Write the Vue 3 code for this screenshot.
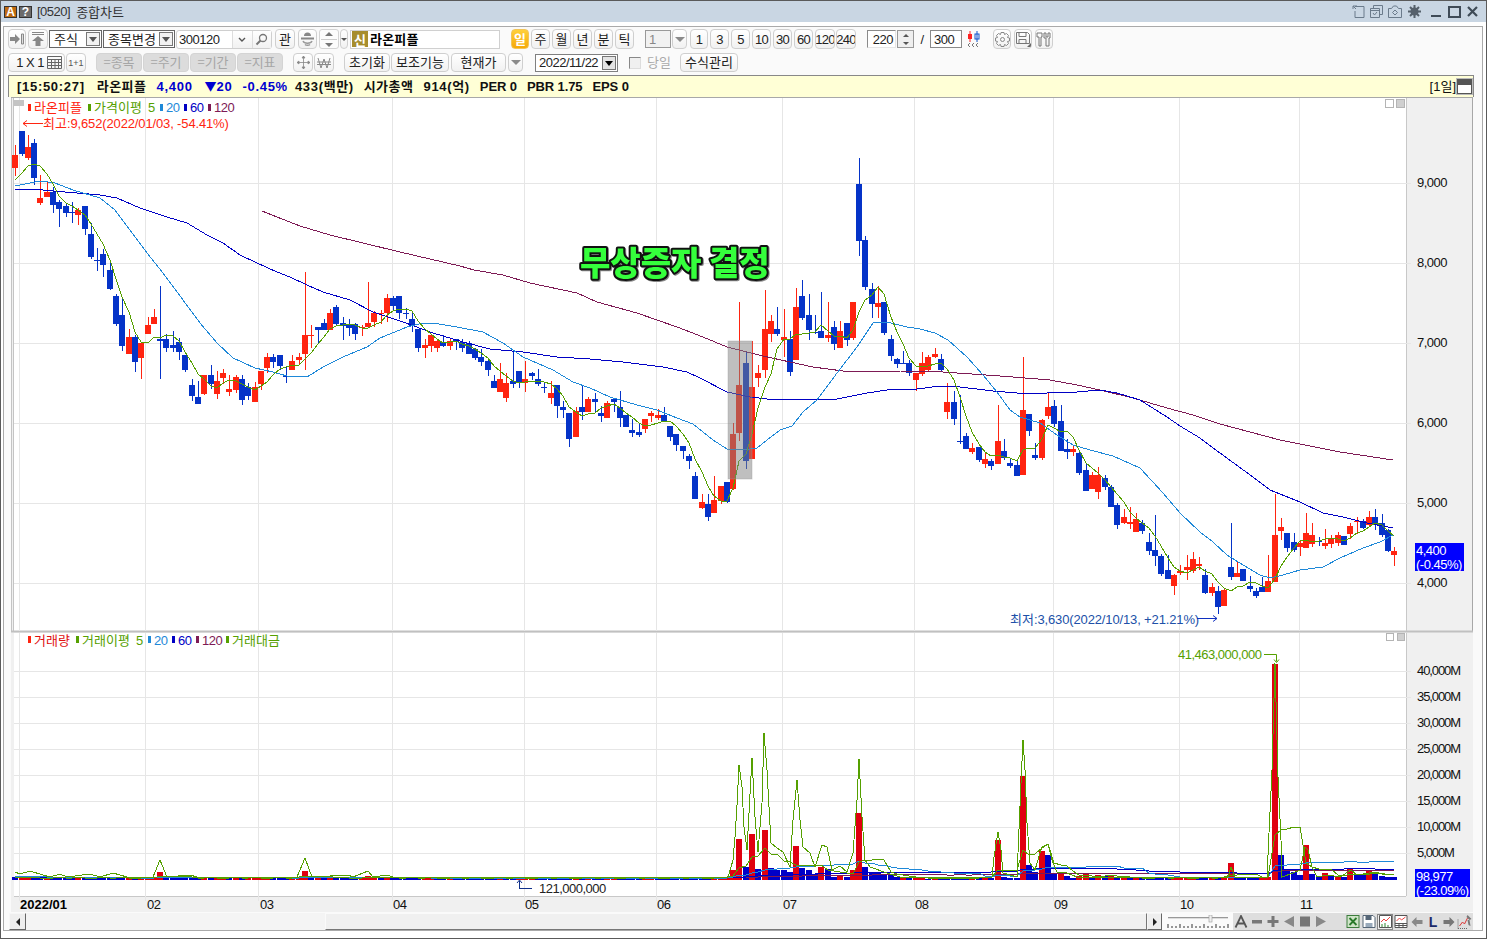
<script setup>
import { computed } from 'vue'

// [up, high, bodyTop, bodyBottom, low] in chart pixels
const candles = [
[1,145,155,168,176],[0,131,131,154,156],[1,135,147,158,160],[0,139,143,178,185],[1,175,198,203,205],[1,182,192,197,197],[0,187,192,205,213],[0,200,202,209,227],[0,203,206,213,217],[0,202,212,213,223],
[1,208,210,215,225],[0,206,206,229,235],[0,223,234,257,259],[0,248,260,261,271],[0,249,254,265,277],[0,261,270,289,290],[0,294,296,324,326],[0,299,315,346,351],[1,329,337,354,354],[0,335,337,362,372],
[1,342,343,358,379],[1,317,325,334,334],[1,309,317,324,324],[0,286,339,341,379],[0,334,339,348,352],[0,331,345,348,352],[0,338,342,352,360],[0,355,355,370,372],[0,379,385,396,401],[0,381,397,404,404],
[1,375,375,394,395],[0,365,375,384,389],[1,371,381,394,399],[1,369,373,378,384],[1,375,389,392,396],[1,375,377,390,393],[0,375,379,400,405],[0,383,387,396,400],[1,382,387,402,402],[1,371,371,384,390],
[1,353,357,368,373],[0,354,357,362,368],[0,355,355,366,370],[0,367,376,377,383],[1,355,361,370,370],[1,353,357,360,365],[1,272,335,354,370],[1,325,335,336,348],[0,327,327,330,343],[0,319,323,330,330],
[1,309,313,330,330],[0,305,307,324,325],[0,317,323,326,340],[0,319,325,328,336],[0,323,324,334,340],[1,325,327,328,336],[1,282,323,327,327],[1,311,313,322,327],[1,310,313,314,324],[1,294,298,313,322],
[0,296,298,306,310],[0,296,296,313,319],[0,308,313,314,319],[0,312,319,326,332],[0,329,329,348,352],[1,339,345,348,358],[1,334,335,346,352],[1,339,341,348,352],[0,335,342,346,347],[1,338,341,346,350],
[0,339,339,342,350],[0,339,342,348,352],[0,341,343,354,354],[0,348,349,358,360],[0,349,357,362,366],[0,358,361,370,376],[0,375,381,388,388],[1,363,379,392,392],[1,373,383,398,402],[0,351,381,384,388],
[0,371,371,383,388],[1,361,379,383,392],[0,372,373,376,380],[0,369,379,384,386],[0,383,387,388,393],[1,381,393,398,404],[0,385,385,406,418],[0,401,407,410,418],[0,413,413,439,447],[1,407,411,437,437],
[0,385,407,412,420],[1,397,399,412,412],[0,393,399,402,412],[0,406,413,416,422],[1,401,403,418,418],[0,399,399,402,412],[0,391,407,418,427],[0,415,415,427,427],[0,419,430,433,437],[0,423,432,435,437],
[1,419,419,429,433],[1,411,413,416,422],[1,409,415,418,420],[0,407,415,422,422],[0,426,426,437,441],[0,434,434,445,451],[0,446,446,451,459],[0,454,456,461,469],[0,472,476,499,499],[1,494,502,508,509],
[0,494,504,517,521],[1,476,500,513,513],[1,486,486,501,504],[0,482,482,502,503],[1,423,434,489,490],[1,302,385,433,441],[0,352,363,461,469],[1,341,387,459,459],[1,365,373,378,387],[1,290,329,370,378],
[1,315,321,334,342],[0,307,329,334,336],[1,309,337,340,357],[0,331,339,372,376],[1,288,307,360,360],[0,280,296,318,320],[0,294,315,330,340],[0,315,332,333,334],[0,292,331,338,338],[1,302,335,338,342],
[0,321,327,344,350],[1,321,331,348,348],[0,323,323,340,346],[1,302,302,338,340],[0,158,184,241,256],[0,236,240,287,290],[0,283,289,304,318],[1,286,303,307,318],[0,302,302,333,335],[0,335,339,356,361],
[0,358,359,364,368],[0,351,363,364,364],[0,360,363,373,376],[1,373,373,380,391],[1,352,363,374,376],[1,355,357,370,371],[1,348,354,357,358],[0,354,359,370,372],[1,383,402,412,419],[0,391,402,419,425],
[0,395,441,442,444],[0,433,436,449,449],[1,443,448,452,454],[0,447,447,460,462],[1,453,459,464,468],[0,459,461,466,470],[1,405,441,464,464],[0,439,451,458,460],[0,459,463,466,468],[0,461,465,476,476],
[1,357,410,475,475],[0,414,414,431,436],[0,443,455,458,460],[1,419,420,458,460],[1,392,407,416,419],[0,400,406,424,427],[0,405,421,451,451],[0,439,449,452,459],[1,446,449,452,456],[0,450,453,473,475],
[0,464,470,491,491],[1,472,475,489,489],[1,467,475,492,499],[0,475,478,487,490],[0,485,487,507,507],[0,503,505,525,529],[1,509,517,523,524],[1,507,522,524,529],[1,513,519,532,532],[0,520,523,531,534],
[0,533,542,551,555],[0,515,550,556,566],[0,554,556,574,576],[0,555,570,579,579],[1,574,575,586,595],[1,565,571,573,575],[1,555,567,570,580],[1,552,559,571,573],[1,557,564,566,570],[0,569,575,593,594],
[1,583,587,593,596],[0,586,591,607,614],[1,589,590,606,606],[0,523,567,577,580],[1,561,573,577,577],[0,569,569,581,581],[0,576,586,589,592],[0,588,591,596,598],[0,577,587,592,592],[1,555,581,592,592],
[1,494,535,582,582],[1,518,527,531,540],[0,533,533,548,552],[0,533,542,550,552],[1,540,543,547,556],[1,513,533,548,548],[1,523,535,544,547],[0,537,541,542,546],[1,529,543,546,549],[1,535,539,544,548],
[1,532,535,543,546],[0,536,536,545,545],[1,523,526,534,539],[1,517,521,522,534],[0,519,521,528,529],[1,511,517,525,527],[0,509,517,525,530],[0,514,523,535,537],[0,529,530,551,552],[1,547,551,555,566],
]

const xAt = (i) => Math.round(15.3 + i * 6.297)
const toPts = (flat) => {
  const out = []
  for (let i = 0; i < flat.length; i += 2) out.push(flat[i] + ',' + flat[i + 1])
  return out.join(' ')
}
const closes = candles.map((c) => (c[0] ? c[2] : c[3]))
const movingAvg = (vals, n, seed) =>
  vals.map((_, i) => {
    let s = 0
    for (let k = i - n + 1; k <= i; k++) s += k >= 0 ? vals[k] : seed
    return s / n
  })
const series = (vals, from = 0) =>
  vals.map((v, i) => (i >= from ? xAt(i) + ',' + Math.round(v) : '')).filter(Boolean).join(' ')

const ma5 = computed(() => series(movingAvg(closes, 5, 186)))

const ma20 = toPts([15,186,40,181,55,183,73,190,100,198,115,210,130,230,147,253,163,273,183,300,200,323,217,343,233,358,255,368,273,372,287,376,307,377,323,367,343,357,367,347,380,338,407,327,423,323,433,323,457,327,483,332,503,343,523,357,553,370,573,382,590,388,610,397,637,405,657,410,677,418,693,424,713,440,727,449,743,450,757,448,767,440,780,430,792,426,803,412,817,400,837,373,857,347,873,323,887,322,907,327,920,329,935,333,948,340,967,357,983,375,997,392,1010,410,1020,417,1040,423,1057,435,1073,445,1090,450,1113,456,1140,468,1163,493,1180,513,1200,532,1213,542,1227,555,1243,565,1260,575,1270,578,1283,575,1300,570,1323,567,1340,558,1363,548,1380,542,1393,535])
const ma60 = toPts([15,190,33,189,53,191,77,193,100,195,117,198,140,208,167,217,187,223,207,235,223,243,240,255,257,263,277,272,290,277,307,285,323,292,350,300,373,312,403,322,433,333,463,342,490,349,523,352,557,357,590,359,623,362,663,367,687,372,700,378,727,392,750,397,767,399,790,400,817,399,837,399,867,393,887,390,917,389,940,386,960,387,993,391,1017,393,1047,393,1077,392,1100,390,1117,393,1140,400,1167,417,1180,426,1200,438,1220,453,1257,480,1270,490,1300,502,1323,513,1343,517,1367,523,1393,528])
const ma120 = toPts([262,211,277,217,300,226,330,235,400,252,460,266,474,270,503,275,530,283,577,293,597,302,637,313,677,327,703,337,727,347,763,356,790,362,813,367,843,371,873,371,900,371,943,372,1000,376,1050,380,1077,385,1100,390,1133,398,1167,408,1193,415,1220,424,1280,440,1340,452,1393,460])

const volOver = {23:[872,1],46:[871,1],56:[876,1],113:[877,1],114:[870,1],115:[839,1],116:[867,0],117:[834,1],118:[869,0],119:[830,1],120:[868,0],121:[870,0],122:[870,0],123:[872,0],124:[846,1],125:[868,0],126:[870,0],127:[874,0],128:[867,1],129:[869,0],130:[877,0],131:[875,1],132:[877,0],133:[870,1],134:[813,1],135:[867,0],136:[872,0],137:[872,0],138:[875,0],139:[875,0],140:[877,0],141:[877,1],142:[877,0],143:[878,1],144:[878,1],145:[879,0],146:[878,1],156:[840,1],160:[776,1],161:[865,0],162:[872,0],163:[851,1],164:[855,0],165:[873,0],166:[873,1],167:[876,0],168:[878,0],169:[876,1],170:[874,1],171:[877,0],172:[875,1],173:[876,0],174:[875,1],175:[877,0],193:[863,1],194:[877,0],199:[877,1],200:[664,1],201:[855,0],202:[869,0],203:[872,0],204:[875,0],205:[845,1],206:[874,0],207:[877,0],208:[873,1],209:[876,0],210:[876,1],211:[877,0],212:[869,1],213:[874,0],214:[875,0],215:[871,1],216:[873,0],217:[876,0],218:[877,0],219:[877,0]}

const volumes = candles.map((c, i) => {
  const o = volOver[i]
  if (o) return { top: o[0], up: o[1] }
  const up = i > 0 && closes[i] < closes[i - 1] ? 1 : 0
  return { top: 880 - (i * 5 % 7 < 3 ? 3 : 2), up }
})
const heights = volumes.map((v) => 880 - v.top)
const volLine = (n, seed, from = 0) =>
  series(movingAvg(heights, n, seed).map((h) => 880 - h), from)
const vol5 = volLine(5, 3)
const vol20 = volLine(20, 4)
const vol60 = volLine(60, 3)
const vol120 = volLine(120, 3, 39)
const valueLine = toPts([15,872,20,874,30,871,43,875,50,877,60,874,67,877,90,874,100,877,113,873,127,877,153,877,160,860,167,877,190,875,197,877,297,877,305,858,312,877,348,875,353,877,368,871,373,877,387,875,393,877,724,877,728,877,731,867,733,860,735,837,737,805,739,765,742,787,744,827,747,850,749,813,752,758,755,817,758,852,762,803,764,733,767,770,771,843,777,848,783,852,790,867,793,820,797,780,800,820,803,847,810,853,815,867,822,845,827,847,832,870,840,866,847,872,853,853,857,800,859,759,862,817,865,860,870,867,887,873,900,877,992,877,994,857,998,832,1001,850,1003,873,1017,877,1018,853,1021,783,1023,740,1025,770,1027,823,1030,863,1035,870,1040,853,1042,847,1048,844,1052,860,1057,872,1067,873,1077,877,1228,877,1231,867,1235,877,1267,877,1269,833,1272,770,1275,663,1278,777,1281,840,1282,877,1293,873,1300,870,1305,847,1308,850,1312,867,1317,877,1327,875,1340,877,1351,870,1357,875,1370,874,1377,873,1393,875])

const gridX = [19, 145, 258, 392, 524, 656, 782, 914, 1053, 1179, 1299]
const monthLabels = [[147,'02'],[260,'03'],[393,'04'],[525,'05'],[657,'06'],[783,'07'],[915,'08'],[1054,'09'],[1180,'10'],[1300,'11']]
const priceAxis = [[183,'9,000'],[263,'8,000'],[343,'7,000'],[423,'6,000'],[503,'5,000'],[583,'4,000']]
const volAxis = [[671,'40,000M'],[697,'35,000M'],[723,'30,000M'],[749,'25,000M'],[775,'20,000M'],[801,'15,000M'],[827,'10,000M'],[853,'5,000M']]
const periods = ['주', '월', '년', '분', '틱']
const minutes = [['1','w18'],['3','w19'],['5','w19'],['10','w19'],['30','w19'],['60','w19'],['120','w20'],['240','w20']]
</script>

<template>
  <div class="window">
    <header class="title">
      <span class="badge orange">A</span>
      <span class="badge grey">?</span>
      <span class="n title-code">[0520]</span>
      <span class="ko title-name">종합차트</span>
      <span class="title-right">
        <svg width="13" height="13" viewBox="0 0 13 13" class="tico"><path d="M3 1.500h9v11H3V6M1 1h4M1 1v3M1 1l3 3" /></svg>
        <svg width="13" height="13" viewBox="0 0 13 13" class="tico"><path d="M3.500 3V.5h9v9H10M.5 3.500h9v9h-9zM.5 5.500h9M3 8l1.500 2L7 7" /></svg>
        <svg width="14" height="13" viewBox="0 0 14 13" class="tico"><path d="M.5 3.500h3l2-2.500h3l2 2.500h3v9H.5zM7 5l2.500 2.500L7 10 4.500 7.500z" /></svg>
        <svg width="13" height="13" viewBox="0 0 13 13" class="tico gear"><circle cx="6.500" cy="6.500" r="3" /><path d="M6.500 0v13M0 6.500h13M2 2l9 9M11 2l-9 9" /></svg>
        <i class="win-min"></i><i class="win-max"></i>
        <svg width="11" height="11" viewBox="0 0 11 11" class="win-x"><path d="M1 1l9 9M10 1l-9 9" /></svg>
      </span>
    </header>

    <div class="frame">
      <div class="row row1">
        <button class="btn w18 ic"><svg width="14" height="12" viewBox="0 0 14 12"><path d="M0 4h5V1l5 5-5 5V8H0z" fill="#888" /><path d="M11.500 1v10h2V1z" fill="#ddd" stroke="#888" /></svg></button>
        <button class="btn w20 m2 ic"><svg width="14" height="15" viewBox="0 0 14 15"><path d="M1 .5h12M1 2.500h12" stroke="#888" /><path d="M7 4l6 5H9.500v5h-5V9H1z" fill="#888" /></svg></button>
        <div class="combo w53 m1"><span class="ko">주식</span><i class="caret"></i></div>
        <div class="combo w72 m1"><span class="ko">종목변경</span><i class="caret"></i></div>
        <div class="code m1">
          <span class="n val">300120</span>
          <span class="code-drop"><svg width="8" height="5" viewBox="0 0 8 5"><path d="M1 1l3 3 3-3" fill="none" stroke="#555" stroke-width="1.400" /></svg></span>
          <span class="code-find"><svg width="13" height="13" viewBox="0 0 13 13"><circle cx="8" cy="5" r="3.500" fill="none" stroke="#777" stroke-width="1.300" /><path d="M5.500 7.500L1.500 11.500" stroke="#777" stroke-width="2" /></svg></span>
        </div>
        <button class="btn w20 m3 ko">관</button>
        <button class="btn w19 m3 ic"><svg width="15" height="15" viewBox="0 0 15 15"><path d="M4 4a3.500 3.500 0 017 0zM1 5.500h13v2H1z" fill="#888" /><path d="M3 9c1 3 8 3 9 0M5 12.500c1 1 4 1 5 0" fill="none" stroke="#999" stroke-width="1.300" /></svg></button>
        <div class="updown m2"><i class="tri-u"></i><i class="mid"></i><i class="tri-d small"></i></div>
        <button class="btn w8 m1 ic"><i class="tri-d tiny"></i></button>
        <div class="name m2"><span class="shin">신</span><b class="ko">라온피플</b></div>

        <button class="btn w18 m11 ko active">일</button>
        <button v-for="p in periods" :key="p" class="btn w19 m2 ko">{{ p }}</button>

        <div class="mini m11"><span class="n">1</span></div>
        <button class="btn w15 m1 ic"><i class="tri-d"></i></button>
        <button v-for="(m, i) in minutes" :key="m[0]" class="btn n" :class="[m[1], i === 0 ? 'm3' : i === 7 ? 'm1' : 'm2']">{{ m[0] }}</button>

        <div class="inp w29 m11"><span class="n">220</span></div>
        <div class="spin"><i class="tri-u tiny"></i><i class="tri-d tiny"></i></div>
        <span class="slash n">/</span>
        <div class="inp w32"><span class="n">300</span></div>
        <span class="candle-ico m4">
          <svg width="16" height="18" viewBox="0 0 16 18"><path d="M4 1v11" stroke="#f22" /><rect x="2" y="4" width="4" height="5" fill="#f22" /><path d="M11 1v11" stroke="#15c" /><rect x="9" y="4" width="4" height="5" fill="none" stroke="#15c" /><path d="M4 13l-2 2 2 2M8 13l-2 2 2 2M12 13l-2 2 2 2" stroke="#777" fill="none" /></svg>
        </span>
        <button class="btn w18 m11 ic"><svg width="15" height="15" viewBox="0 0 15 15"><path d="M6 .5h3l.5 2 2-1 2 2-1 2 2 .5v3l-2 .5 1 2-2 2-2-1-.5 2H6l-.5-2-2 1-2-2 1-2-2-.5v-3l2-.5-1-2 2-2 2 1z" fill="none" stroke="#888" /><circle cx="7.500" cy="7.500" r="2" fill="none" stroke="#888" /></svg></button>
        <button class="btn w18 m3 ic"><svg width="15" height="15" viewBox="0 0 15 15"><path d="M.5.5h11l2 2v9h-13zM3 .5v4h7v-4M3 11.500v-4h7v4" fill="none" stroke="#777" /><path d="M15 11v4h-4z" fill="#666" /></svg></button>
        <button class="btn w18 m3 ic"><svg width="16" height="15" viewBox="0 0 16 15"><path d="M1 1h5v4H5v9H3V5H1zM8 1h2v4h2V1h2v5h-1v8h-3V6H8z" fill="none" stroke="#777" /></svg></button>
      </div>

      <div class="row row2">
        <button class="btn w57 grid-btn"><span class="n">1 X 1</span><svg width="15" height="13" viewBox="0 0 15 13"><path d="M.5.5h14v12H.5zM.5 3.500h14M.5 6.500h14M.5 9.500h14M4.500 3.500v9M8 3.500v9M11.500 3.500v9" fill="none" stroke="#666" /></svg></button>
        <button class="btn w20 m1 plus">1+1</button>
        <button class="btn w46 m10 off ko">=종목</button>
        <button class="btn w46 m1 off ko">=주기</button>
        <button class="btn w46 m1 off ko">=기간</button>
        <button class="btn w46 m1 off ko">=지표</button>
        <button class="btn w20 m10 ic"><svg width="15" height="15" viewBox="0 0 15 15"><path d="M7.500 1v13M1 7.500h13M7.500 1L6 3h3zM7.500 14L6 12h3zM1 7.500L3 6v3zM14 7.500L12 6v3z" fill="#888" stroke="#888" stroke-width=".8" /></svg></button>
        <button class="btn w20 m1 ic"><svg width="14" height="12" viewBox="0 0 14 12"><path d="M1 1l3 10 3-9 3 9 3-10M0 5h14M0 7.500h14" fill="none" stroke="#888" /></svg></button>
        <button class="btn w46 m10 ko">초기화</button>
        <button class="btn w58 m1 ko">보조기능</button>
        <button class="btn w55 m2 ko">현재가</button>
        <button class="btn w15 m2 ic"><i class="tri-d"></i></button>
        <div class="combo date m12"><span class="n">2022/11/22</span><i class="caret dark"></i></div>
        <i class="check m11"></i>
        <span class="ko today m6">당일</span>
        <button class="btn w58 m9 ko">수식관리</button>
      </div>

      <div class="info">
        <span class="n">[15:50:27]</span>
        <span class="ko sp i-name">라온피플</span>
        <span class="n blue">4,400</span>
        <span class="blue ud"><span class="ko">▼</span><span class="n">20</span></span>
        <span class="n blue">-0.45%</span>
        <span class="i-amt"><span class="n">433(</span><span class="ko sp">백만</span><span class="n">)</span></span>
        <span class="ko sp">시가총액</span>
        <span><span class="n">914(</span><span class="ko sp">억</span><span class="n">)</span></span>
        <span class="n cap">PER 0</span>
        <span class="n cap">PBR 1.75</span>
        <span class="n cap">EPS 0</span>
        <span class="info-right">
          <span class="thin"><span class="n">[1</span><span class="ko">일</span><span class="n">]</span></span>
          <i class="winbtn"></i>
        </span>
      </div>

      <svg class="chart" width="1462" height="815" viewBox="11 97 1462 815">
        <rect x="11" y="97" width="1462" height="815" fill="#f0f0f0" />
        <rect x="14" y="98" width="1392" height="533" fill="#fff" />
        <rect x="14" y="633" width="1392" height="263" fill="#fff" />
        <path d="M11.500 97v534M13.500 98v533" stroke="#c4c4c4" shape-rendering="crispEdges" />
        <path d="M11 97.500h1462M1472.500 97v535" stroke="#a8a8a8" shape-rendering="crispEdges" />
        <rect x="11" y="630.500" width="1462" height="2" fill="#c0c0c0" />
        <path d="M1406.500 98v533M1406.500 633v263M14 896h1392" stroke="#c8c8c8" shape-rendering="crispEdges" />

        <g shape-rendering="crispEdges" stroke="#e6e6e6">
          <path v-for="x in gridX" :key="'g' + x" :d="`M${x}.5 98v533M${x}.5 633v268`" />
          <path v-for="a in priceAxis" :key="'p' + a[0]" :d="`M14 ${a[0]}.5h1397`" />
          <path v-for="a in volAxis" :key="'v' + a[0]" :d="`M14 ${a[0]}.5h1397`" />
        </g>

        <rect x="14" y="100" width="10" height="6" fill="#c4c4c4" />
        <g fill="#cfcfcf" stroke="#b4b4b4" shape-rendering="crispEdges">
          <rect x="1385.500" y="99.500" width="8" height="8" fill="#fff" /><rect x="1396.500" y="99.500" width="8" height="8" />
          <rect x="1386.500" y="633.500" width="7" height="7" fill="#fff" /><rect x="1397.500" y="633.500" width="7" height="7" />
        </g>

        <!-- candles -->
        <g shape-rendering="crispEdges">
          <g v-for="(c, i) in candles" :key="'c' + i" :fill="c[0] ? '#ff2410' : '#0533c8'">
            <rect :x="xAt(i)" :y="c[1]" width="1" :height="Math.max(c[4] - c[1], 1)" />
            <rect :x="xAt(i) - 3" :y="c[2]" width="6" :height="Math.max(c[3] - c[2], 1)" />
          </g>
        </g>
        <g fill="none" shape-rendering="crispEdges">
          <polyline :points="ma120" stroke="#7d1a55" />
          <polyline :points="ma60" stroke="#0000c4" />
          <polyline :points="ma20" stroke="#1e88d8" />
          <polyline :points="ma5" stroke="#55a000" />
        </g>
        <rect x="728" y="341" width="24" height="138" fill="#808080" fill-opacity=".5" stroke="#a0a0a0" stroke-opacity=".4" />

        <text x="580" y="275" class="headline">무상증자 결정</text>

        <!-- main legend -->
        <rect x="28" y="104" width="3" height="7" fill="#ff2410" />
        <text x="34" y="112" class="ko" fill="#ff2410">라온피플</text>
        <rect x="88" y="104" width="3" height="7" fill="#55a000" />
        <text x="94" y="112" class="ko" fill="#55a000">가격이평</text>
        <text x="148" y="112" class="n" fill="#55a000">5</text>
        <rect x="160" y="104" width="3" height="7" fill="#1e88d8" />
        <text x="166" y="112" class="n" fill="#1e88d8">20</text>
        <rect x="184" y="104" width="3" height="7" fill="#0000c4" />
        <text x="190" y="112" class="n" fill="#0000c4">60</text>
        <rect x="208" y="104" width="3" height="7" fill="#7d1a55" />
        <text x="214" y="112" class="n" fill="#7d1a55">120</text>

        <path d="M23 123.500h20M27 120.500l-4 3 4 3" fill="none" stroke="#ff2410" />
        <text x="43" y="128" class="ko" fill="#ff2410">최고</text>
        <text x="67" y="128" class="n wide" fill="#ff2410">:9,652(2022/01/03, -54.41%)</text>

        <text x="1010" y="624" class="ko" fill="#2050a8">최저</text>
        <text x="1034" y="624" class="n wide" fill="#2050a8">:3,630(2022/10/13, +21.21%)</text>
        <path d="M1197 618.500h20M1213 615.500l4 3-4 3" fill="none" stroke="#1030c0" />

        <text v-for="a in priceAxis" :key="'pl' + a[0]" x="1417" :y="a[0] + 4" class="n" fill="#111">{{ a[1] }}</text>
        <rect x="1415" y="543" width="49" height="28" fill="#0000ff" />
        <text x="1416" y="555" class="n" fill="#fff">4,400</text>
        <text x="1416" y="569" class="n" fill="#fff">(-0.45%)</text>

        <!-- volume -->
        <g shape-rendering="crispEdges">
          <rect v-for="(v, i) in volumes" :key="'b' + i" :x="xAt(i) - 3" :y="v.top" width="6" :height="880 - v.top" :fill="v.up ? '#e00010' : '#0000c8'" />
        </g>
        <g fill="none" shape-rendering="crispEdges">
          <polyline :points="vol120" stroke="#7d1a55" />
          <polyline :points="vol60" stroke="#0000c4" />
          <polyline :points="vol20" stroke="#1e88d8" />
          <polyline :points="vol5" stroke="#55a000" />
          <polyline :points="valueLine" stroke="#55a000" />
        </g>

        <rect x="28" y="636" width="3" height="7" fill="#ff2410" />
        <text x="34" y="645" class="ko" fill="#e01010">거래량</text>
        <rect x="76" y="636" width="3" height="7" fill="#55a000" />
        <text x="82" y="645" class="ko" fill="#55a000">거래이평</text>
        <text x="136" y="645" class="n" fill="#55a000">5</text>
        <rect x="148" y="636" width="3" height="7" fill="#1e88d8" />
        <text x="154" y="645" class="n" fill="#1e88d8">20</text>
        <rect x="172" y="636" width="3" height="7" fill="#0000c4" />
        <text x="178" y="645" class="n" fill="#0000c4">60</text>
        <rect x="196" y="636" width="3" height="7" fill="#7d1a55" />
        <text x="202" y="645" class="n" fill="#7d1a55">120</text>
        <rect x="226" y="636" width="3" height="7" fill="#55a000" />
        <text x="232" y="645" class="ko" fill="#55a000">거래대금</text>

        <text x="1178" y="659" class="n" fill="#55a000">41,463,000,000</text>
        <path d="M1264 654.500h12.500v7M1274 659.500l2.500 3 2.500-3" fill="none" stroke="#55a000" />
        <path d="M519.500 888v-7M517 883l2.500-3 2.500 3M519 888.500h13" fill="none" stroke="#10308a" />
        <text x="539" y="893" class="n" fill="#222">121,000,000</text>

        <text v-for="a in volAxis" :key="'vl' + a[0]" x="1417" :y="a[0] + 4" class="n vs" fill="#111">{{ a[1] }}</text>
        <rect x="1415" y="869" width="55" height="28" fill="#0000ff" />
        <text x="1416" y="881" class="n" fill="#fff">98,977</text>
        <text x="1416" y="895" class="n" fill="#fff">(-23.09%)</text>

        <text x="20" y="909" class="n year">2022/01</text>
        <text v-for="m in monthLabels" :key="m[1]" :x="m[0]" y="909" class="n" fill="#111">{{ m[1] }}</text>
      </svg>

      <footer class="foot">
        <button class="sbtn"><i class="tri-l"></i></button>
        <div class="track"></div>
        <div class="thumb"></div>
        <button class="sbtn narrow"><i class="tri-r"></i></button>
        <div class="slider">
          <svg width="62" height="14" viewBox="0 0 62 14"><path d="M1 2.500h60" stroke="#999" /><path d="M1 3.500h60" stroke="#ddd" /><rect x="42" y="0" width="3" height="7" fill="#eee" stroke="#999" stroke-width=".6" /><path d="M1 13V9M5 13v-2M9 13v-2M13 13V9M17 13v-2M21 13v-2M25 13V9M29 13v-2M33 13v-2M37 13V9M41 13v-2M45 13v-2M49 13V9M53 13v-2M57 13v-2M61 13V9" stroke="#333" /></svg>
        </div>
        <div class="tools">
          <svg height="13" viewBox="0 0 13 13" class="t"><path d="M1 12.500L6.500 1 12 12.500M3 8.500h7" fill="none" stroke="#555" stroke-width="1.800" /></svg>
          <svg height="13" viewBox="0 0 12 13" class="t"><rect x="1" y="5" width="10" height="3.500" fill="#777" /></svg>
          <svg height="13" viewBox="0 0 13 13" class="t"><path d="M5 1h3v4h4v3H8v4H5V8H1V5h4z" fill="#777" /></svg>
          <svg height="13" viewBox="0 0 12 13" class="t"><path d="M11 1v11L1 6.500z" fill="#888" /></svg>
          <svg height="13" viewBox="0 0 12 13" class="t"><rect x="1" y="1.500" width="10" height="10" fill="#777" /></svg>
          <svg height="13" viewBox="0 0 12 13" class="t"><path d="M1 1v11l10-5.500z" fill="#888" /></svg>
          <svg height="13" viewBox="0 0 13 13" class="t xls"><rect x=".5" y=".5" width="12" height="12" fill="#cfe4c8" stroke="#3d7d3d" /><path d="M3 3l7 7M10 3l-7 7" stroke="#2a7a2a" stroke-width="1.800" /></svg>
          <svg height="13" viewBox="0 0 13 13" class="t"><path d="M.5.5h10l2 2v10H.5z" fill="#fff" stroke="#567" /><rect x="3" y="1" width="6" height="4" fill="#567" /><rect x="3" y="8" width="7" height="4" fill="#9ab" /></svg>
          <span class="framed"><svg width="13" height="13" viewBox="0 0 13 13"><path d="M.5.5h12v12H.5z" fill="#fff" stroke="#555" /><path d="M2 7l3-3 2 2 4-4" fill="none" stroke="#e44" /><path d="M3 12V9M6 12V8M9 12v-2" stroke="#383" /></svg></span>
          <svg height="13" viewBox="0 0 13 13" class="t"><path d="M.5.5h12v12H.5zM.5 8.500h12M.5 10.500h12M4.500 8.500v4M8.500 8.500v4" fill="#fff" stroke="#555" /><path d="M2 6l3-3 2 2 4-3" fill="none" stroke="#e44" /></svg>
          <svg height="12" viewBox="0 0 11 12" class="t"><path d="M0 6l5-5v3h6v4H5v3z" fill="#888" /></svg>
          <span class="ell t">L</span>
          <svg height="12" viewBox="0 0 11 12" class="t"><path d="M11 6L6 1v3H0v4h6v3z" fill="#777" /></svg>
          <svg height="15" viewBox="0 0 15 15" class="t"><path d="M.5 14.500v-9M.5 14.500h9" stroke="#666" stroke-dasharray="1 1" /><path d="M2 12l3-4 2 2 3-6" fill="none" stroke="#d33" /><path d="M10 1l4 4-2 1-3-3zM12 6l1 6-2-1-1-5z" fill="#777" /></svg>
        </div>
      </footer>
    </div>
  </div>
</template>

<style>
html, body { margin: 0; padding: 0; background: #fff; }
</style>

<style scoped>
.window {
  width: 1487px;
  height: 939px;
  box-sizing: border-box;
  border: 1px solid #5a5a5a;
  background: #fff;
  display: flex;
  flex-direction: column;
  font-family: "Liberation Sans", "Noto Sans CJK KR", sans-serif;
  color: #222;
  overflow: hidden;
}
.title {
  height: 21px;
  flex: none;
  background: #c9d6e3;
  display: flex;
  align-items: center;
  padding-left: 3px;
}
.badge {
  width: 13px;
  height: 12px;
  display: flex;
  align-items: center;
  justify-content: center;
  font: bold 12px "Liberation Sans", sans-serif;
  color: #fff;
  box-sizing: border-box;
}
.orange { background: #bf6a10; border: 1px solid #333; }
.grey { background: #6b6b6b; border: 1px solid #333; margin-left: 2px; }
.title-code { margin-left: 5px; color: #333; }
.title-name { margin-left: 6px; color: #333; }
.title-right {
  margin-left: auto;
  display: flex;
  align-items: center;
  padding-right: 8px;
}
.tico { fill: none; stroke: #6b7b8b; margin-left: 5px; }
.tico.gear { stroke: #55606b; stroke-width: 2; margin-left: 6px; }
.win-min { width: 10px; height: 2px; background: #3f4b57; margin: 9px 7px 0 10px; }
.win-max { width: 9px; height: 8px; border: 2px solid #3f4b57; }
.win-x { fill: none; stroke: #3f4b57; stroke-width: 2.200; margin-left: 6px; }

.frame {
  margin: 4px 3px 7px 2px;
  border: 1px solid #aaa;
  background: #fafafa;
  padding: 2px 8px 0 4px;
  flex: 1;
  display: flex;
  flex-direction: column;
  min-height: 0;
}
.row { display: flex; align-items: center; flex: none; }
.row1 { height: 20px; }
.row2 { height: 19px; margin-top: 4px; }

.ko { font-family: "Noto Sans CJK KR", sans-serif; font-size: 13px; }
.n { font-family: "Liberation Sans", sans-serif; font-size: 13px; letter-spacing: -.5px; }
.n.vs { letter-spacing: -1.1px; }
.n.wide { letter-spacing: -.14px; }

.btn {
  box-sizing: border-box;
  height: 100%;
  padding: 0;
  border: 1px solid #cfcfcf;
  border-radius: 4px;
  background: linear-gradient(#fff, #f1f1f1);
  color: #222;
  display: flex;
  align-items: center;
  justify-content: center;
  flex: none;
  line-height: 1;
  overflow: hidden;
}
.btn.ko { padding-bottom: 2px; }
.btn.n { letter-spacing: -.8px; }
.active { background: linear-gradient(#ffd03a, #f6a908); color: #fff; border-color: #f1c55a; font-weight: 700; }
.off { background: #dcdcdc; color: #a6a6a6; border-color: #d4d4d4; }
.plus { font: 9px "Liberation Sans", sans-serif; color: #555; }

.w8 { width: 8px; } .w15 { width: 15px; } .w18 { width: 18px; } .w19 { width: 19px; } .w20 { width: 20px; }
.w29 { width: 29px; } .w32 { width: 32px; } .w46 { width: 46px; } .w53 { width: 53px; } .w55 { width: 55px; }
.w57 { width: 57px; } .w58 { width: 58px; } .w72 { width: 72px; }
.m1 { margin-left: 1px; } .m2 { margin-left: 2px; } .m3 { margin-left: 3px; } .m4 { margin-left: 4px; } .m6 { margin-left: 6px; }
.m9 { margin-left: 9px; } .m10 { margin-left: 10px; } .m11 { margin-left: 11px; } .m12 { margin-left: 12px; }

.combo {
  box-sizing: border-box;
  height: 18px;
  border: 1px solid #666;
  background: #fff;
  display: flex;
  align-items: center;
  justify-content: space-between;
  padding-left: 4px;
  flex: none;
}
.combo .ko, .name .ko, .today { line-height: 1; margin-bottom: 2px; }
.caret {
  width: 14px;
  height: 14px;
  box-sizing: border-box;
  border: 1px solid #777;
  margin-right: 1px;
  background: #f2f2f2;
  position: relative;
  flex: none;
}
.caret::after {
  content: "";
  position: absolute;
  left: 2px;
  top: 4px;
  border-left: 4px solid transparent;
  border-right: 4px solid transparent;
  border-top: 5px solid #555;
}
.caret.dark { background: #e4e4e4; }
.caret.dark::after { border-top-color: #000; }
.date { width: 83px; padding-left: 3px; border-color: #808080; }

.code {
  box-sizing: border-box;
  width: 96px;
  height: 19px;
  border: 1px solid #cfcfcf;
  border-radius: 3px;
  background: #fff;
  display: flex;
  align-items: center;
  flex: none;
}
.val { margin-left: 2px; width: 55px; }
.code-drop, .code-find {
  height: 17px;
  display: flex;
  align-items: center;
  justify-content: center;
  border-left: 1px solid #ddd;
  background: linear-gradient(#fff, #f1f1f1);
}
.code-drop { width: 19px; }
.code-find { width: 19px; }

.updown {
  box-sizing: border-box;
  width: 20px;
  height: 100%;
  border: 1px solid #d4d4d4;
  border-radius: 3px;
  display: flex;
  flex-direction: column;
  align-items: center;
  justify-content: center;
  background: #fcfcfc;
  flex: none;
}
.updown .mid { width: 16px; height: 1px; background: #ccc; margin: 3px 0; }
.tri-u { width: 0; height: 0; border-left: 4px solid transparent; border-right: 4px solid transparent; border-bottom: 4px solid #777; }
.tri-d { width: 0; height: 0; border-left: 5px solid transparent; border-right: 5px solid transparent; border-top: 5px solid #8a8a8a; }
.tri-d.small { border-left-width: 4px; border-right-width: 4px; border-top-width: 4px; border-top-color: #777; }
.tri-d.tiny, .tri-u.tiny { border-left-width: 3px; border-right-width: 3px; }
.tri-d.tiny { border-top-width: 3px; border-top-color: #555; }
.tri-u.tiny { border-bottom-width: 3px; border-bottom-color: #555; }
.tri-l { width: 0; height: 0; border-top: 4px solid transparent; border-bottom: 4px solid transparent; border-right: 4px solid #222; }
.tri-r { width: 0; height: 0; border-top: 4px solid transparent; border-bottom: 4px solid transparent; border-left: 4px solid #222; }

.name {
  box-sizing: border-box;
  width: 150px;
  height: 19px;
  border: 1px solid #d0d0d0;
  background: #fff;
  display: flex;
  align-items: center;
  padding-left: 1px;
  flex: none;
}
.name b { font-weight: 700; margin-left: 2px; color: #000; letter-spacing: .2px; }
.shin {
  width: 16px;
  height: 16px;
  background: #a68d2e;
  color: #fff;
  font: 700 13px "Noto Sans CJK KR", sans-serif;
  display: flex;
  align-items: center;
  justify-content: center;
  line-height: 1;
}

.mini {
  box-sizing: border-box;
  width: 26px;
  height: 18px;
  border: 1px solid #999;
  background: #f1f1f1;
  display: flex;
  align-items: center;
  padding-left: 3px;
  color: #888;
  flex: none;
}
.inp {
  box-sizing: border-box;
  height: 18px;
  border: 1px solid #8a8a8a;
  border-right-color: #e6e6e6;
  border-bottom-color: #e6e6e6;
  background: #fff;
  display: flex;
  align-items: center;
  justify-content: flex-end;
  padding-right: 2px;
  flex: none;
}
.w32.inp { border: 1px solid #8a8a8a; justify-content: flex-start; padding-left: 3px; }
.spin {
  box-sizing: border-box;
  width: 17px;
  height: 18px;
  border: 1px solid #999;
  background: #efefef;
  display: flex;
  flex-direction: column;
  align-items: center;
  justify-content: space-around;
  flex: none;
  margin-left: 1px;
}
.slash { width: 16px; text-align: center; }
.candle-ico { display: flex; width: 16px; justify-content: center; flex: none; }

.grid-btn { justify-content: flex-end; padding-right: 2px; gap: 3px; }
.check {
  width: 12px;
  height: 12px;
  box-sizing: border-box;
  border: 1px solid #888;
  border-right-color: #ddd;
  border-bottom-color: #ddd;
  background: #f0f0f0;
  flex: none;
}
.today { color: #aaa; }

.info {
  box-sizing: border-box;
  height: 22px;
  margin-top: 3px;
  border: 1px solid #888;
  border-bottom: none;
  background: #ffffd6;
  display: flex;
  align-items: baseline;
  gap: 10px;
  padding: 2px 0 0 8px;
  line-height: 16px;
  color: #111;
  flex: none;
}
.info .n { letter-spacing: .7px; font-weight: 700; }
.info .n.cap { letter-spacing: -.1px; }
.info .sp { letter-spacing: .5px; font-weight: 700; }
.info .ko { font-weight: 700; }
.i-name { margin-left: 2px; }
.i-amt { margin-left: -3px; }
.ud { margin-left: 2px; }
.blue, .blue .n, .info .n.blue { color: #0000d0; }
.ud .ko { font-size: 12px; }
.info-right { margin-left: auto; display: flex; align-items: center; align-self: center; margin-top: -2px; gap: 1px; }
.thin, .info .thin .n, .info .thin .ko { font-weight: 400; letter-spacing: 0; }
.winbtn {
  box-sizing: border-box;
  width: 15px;
  height: 15px;
  margin-right: 1px;
  background: linear-gradient(#555 0 5px, #fff 5px);
  border: 1px solid #555;
  outline: 1px solid #bbb;
}

.chart { display: block; margin-left: 3px; flex: none; }
.year { font-weight: 700; letter-spacing: 0; fill: #000; }
.headline {
  font-family: "Noto Sans CJK KR", sans-serif;
  font-size: 33px;
  font-weight: 900;
  fill: #35ff3c;
  stroke: #111;
  stroke-width: 4px;
  paint-order: stroke;
  stroke-linejoin: round;
  filter: drop-shadow(1px 1px 0 #888);
}

.foot {
  flex: none;
  height: 17px;
  display: flex;
  align-items: stretch;
  margin: 1px 0 0 1px;
}
.sbtn {
  box-sizing: border-box;
  width: 17px;
  padding: 0;
  border: 1px solid;
  border-color: #f6f6f6 #666 #666 #f6f6f6;
  background: #eee;
  display: flex;
  align-items: center;
  justify-content: center;
  flex: none;
}
.sbtn.narrow { width: 15px; }
.track { width: 299px; background: #f4f4f4; flex: none; }
.thumb {
  box-sizing: border-box;
  width: 822px;
  flex: none;
  background: #f0f0f0;
  border: 1px solid;
  border-color: #fafafa #777 #777 #fafafa;
}
.slider { width: 71px; flex: none; display: flex; align-items: center; padding-left: 5px; box-sizing: border-box; }
.tools {
  width: 240px;
  flex: none;
  background: #dedede;
  display: flex;
  align-items: center;
  box-sizing: border-box;
}
.t { width: 16px; flex: none; }
.xls { margin-left: 16px; }
.framed {
  box-sizing: border-box;
  width: 16px;
  height: 16px;
  border: 1px solid #888;
  background: #eee;
  display: flex;
  align-items: center;
  justify-content: center;
  flex: none;
}
.ell { font: 700 14px "Liberation Sans", sans-serif; color: #1a2a6a; text-align: center; }
</style>
